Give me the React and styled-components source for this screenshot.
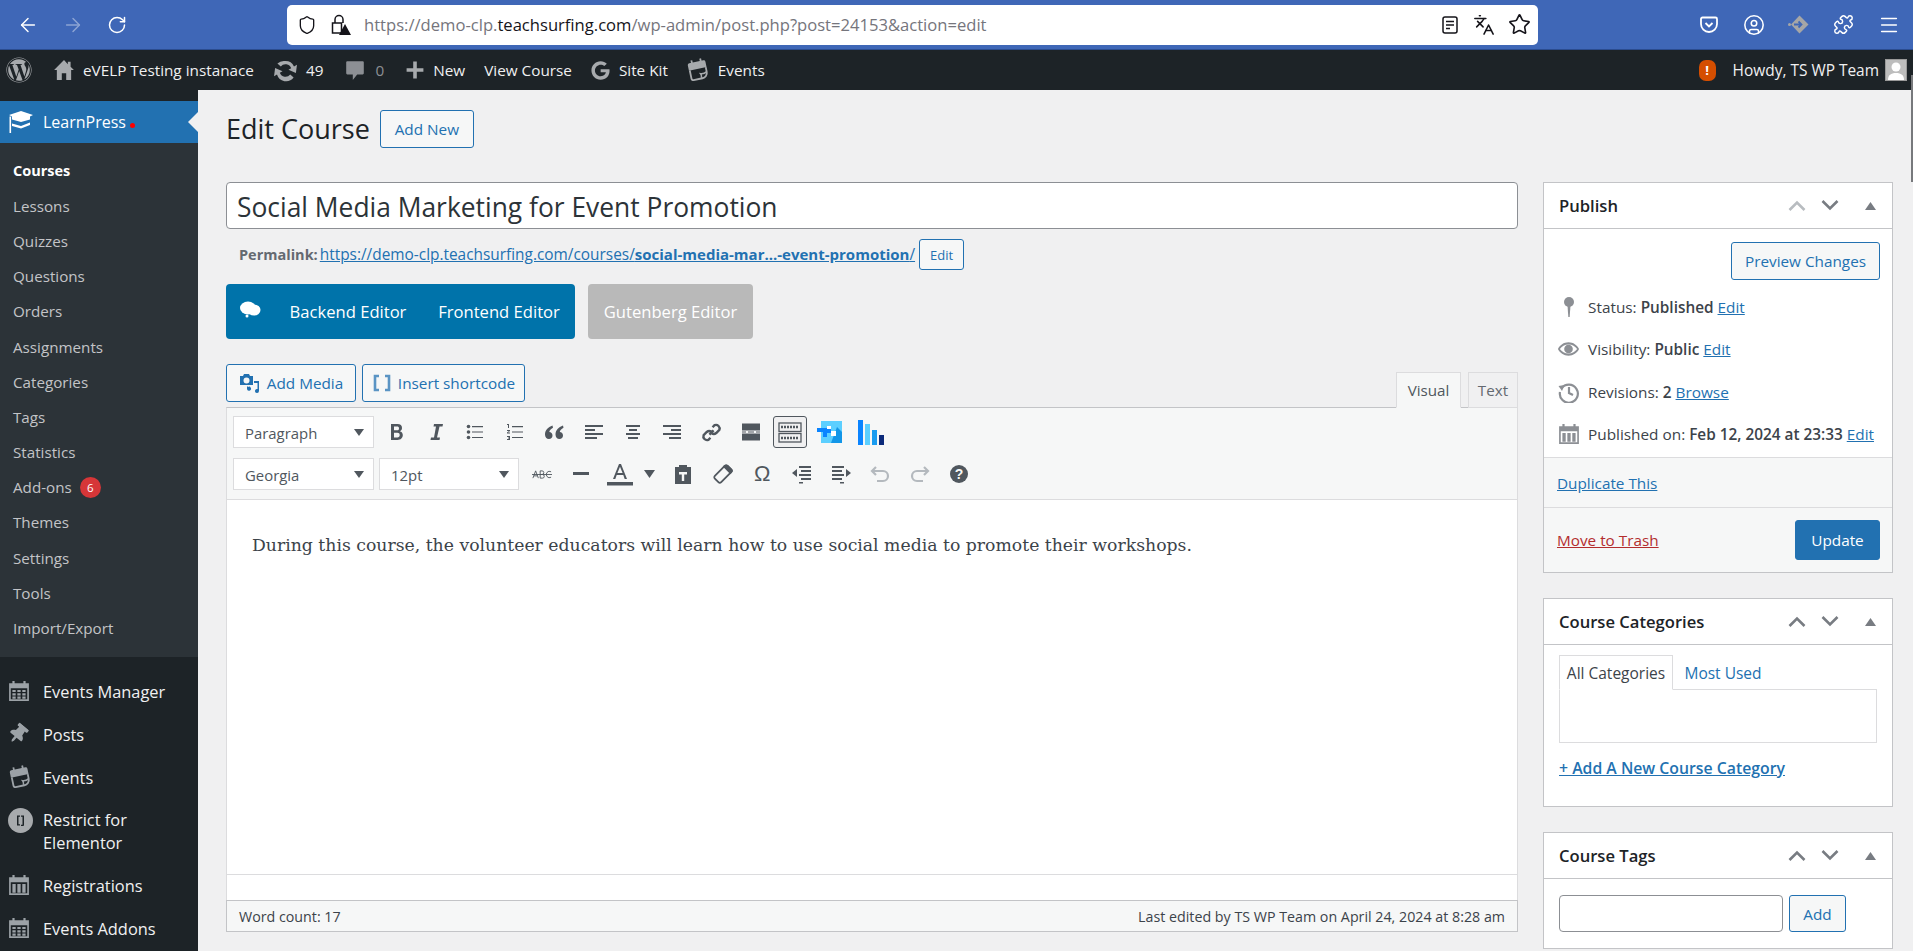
import React from "react";
import styled, { createGlobalStyle } from "styled-components";
import { FaWordpress, FaGoogle, FaThumbtack } from "react-icons/fa";
import { ArrowLeft, ArrowRight, RotateCw, Shield, Star, Languages, Menu, Puzzle, CircleUser } from "lucide-react";

const FONT = `"Open Sans", "Noto Sans", "Liberation Sans", sans-serif`;

const GlobalStyle = createGlobalStyle`
  html, body {
    margin: 0;
    height: 100%;
    overflow: hidden;
    background: #f0f0f1;
  }
  * { box-sizing: border-box; }
  body {
    font-family: ${FONT};
    font-size: 15px;
    color: #3c434a;
  }
`;

const Root = styled.div`
  position: relative;
  width: 1913px;
  height: 951px;
  display: flex;
  flex-direction: column;
  overflow: hidden;
`;

const ScrollThumb = styled.div`
  position: absolute;
  top: 75px;
  right: 0;
  width: 2px;
  height: 107px;
  background: #77797c;
`;

/* browser chrome */
const Chrome = styled.div`
  height: 50px;
  flex: none;
  display: flex;
  align-items: center;
  background: #3f67b7;
  border-bottom: 1px solid #2b4c8f;
  color: #fff;
`;

const NavButtons = styled.div`
  width: 287px;
  flex: none;
  display: flex;
  align-items: center;
  gap: 23px;
  padding-left: 17px;
`;

const UrlBar = styled.div`
  width: 1251px;
  height: 40px;
  flex: none;
  display: flex;
  align-items: center;
  background: #fff;
  border-radius: 5px;
  color: #15141a;
  padding: 0 7px 0 10px;
`;

const UrlText = styled.div`
  flex: 1;
  font-size: 16.6px;
  color: #75757c;
  padding-left: 13px;
  white-space: nowrap;
  b {
    font-weight: 400;
    color: #15141a;
  }
`;

const UrlIcons = styled.div`
  display: flex;
  align-items: center;
  gap: 13px;
`;

const LockWrap = styled.div`
  width: 20px;
  height: 22px;
  margin-left: 14px;
`;

const ChromeIcons = styled.div`
  flex: 1;
  display: flex;
  align-items: center;
  justify-content: flex-end;
  padding-right: 2px;
`;

const ChromeSlot = styled.span`
  width: 45px;
  display: flex;
  justify-content: center;
`;

/* admin bar */
const AdminBar = styled.div`
  height: 40px;
  flex: none;
  display: flex;
  align-items: center;
  background: #1d2327;
  color: #f0f0f1;
  font-size: 15.3px;
  padding-left: 6px;
`;

const BarItem = styled.div`
  display: flex;
  align-items: center;
  gap: ${(p) => p.$gap || 8}px;
  margin-right: ${(p) => p.$mr || 0}px;
  color: ${(p) => (p.$dim ? "#8c8f94" : "#f0f0f1")};
  white-space: nowrap;
  svg { color: ${(p) => (p.$dim ? "#8c8f94" : "#a7aaad")}; }
`;

const BarRight = styled.div`
  margin-left: auto;
  display: flex;
  align-items: center;
  padding-right: 6px;
  font-size: 15.45px;
`;

const Alert = styled.span`
  width: 17px;
  height: 21px;
  border-radius: 7px;
  background: #d54e00;
  color: #fff;
  font-size: 13px;
  font-weight: 700;
  display: flex;
  align-items: center;
  justify-content: center;
  margin-right: 17px;
`;

const Avatar = styled.span`
  width: 22px;
  height: 22px;
  margin-left: 6px;
  background: #bdbdbd;
  border: 1px solid #9a9a9a;
  display: flex;
  align-items: flex-end;
  justify-content: center;
  overflow: hidden;
`;

const Body = styled.div`
  flex: 1;
  min-height: 0;
  display: flex;
`;

/* sidebar */
const Sidebar = styled.nav`
  width: 198px;
  flex: none;
  background: #1d2327;
  padding-top: 11px;
`;

const ActiveItem = styled.div`
  position: relative;
  height: 42px;
  background: #2271b1;
  color: #fff;
  font-size: 16px;
  display: flex;
  align-items: center;
  padding-left: 8px;
  gap: 9px;
  &::after {
    content: "";
    position: absolute;
    right: 0;
    top: 11px;
    border: 10px solid transparent;
    border-left-width: 0;
    border-right-color: #f0f0f1;
  }
`;

const RedDot = styled.span`
  width: 5px;
  height: 5px;
  border-radius: 50%;
  background: #f00;
  margin: 6px 0 0 -5px;
`;

const SubMenu = styled.div`
  background: #2c3338;
  padding: 10px 0 11px;
  margin-bottom: 13px;
`;

const SubItem = styled.div`
  height: 35.2px;
  display: flex;
  align-items: center;
  gap: 8px;
  padding-left: 13px;
  font-size: ${(p) => (p.$active ? 14.5 : 15.2)}px;
  color: ${(p) => (p.$active ? "#fff" : "#c3c4c7")};
  font-weight: ${(p) => (p.$active ? 700 : 400)};
`;

const Count = styled.span`
  width: 21px;
  height: 21px;
  border-radius: 50%;
  background: #d63638;
  color: #fff;
  font-size: 11.5px;
  display: flex;
  align-items: center;
  justify-content: center;
`;

const TopItem = styled.div`
  display: flex;
  align-items: ${(p) => (p.$tall ? "flex-start" : "center")};
  min-height: 43px;
  padding: ${(p) => (p.$tall ? "9px 0 10px 8px" : "0 0 0 8px")};
  color: #f0f0f1;
  font-size: 16.4px;
  line-height: 23px;
`;

const TopIcon = styled.span`
  width: 35px;
  flex: none;
  display: flex;
  color: #9ca2a7;
`;

/* main */
const Main = styled.main`
  flex: 1;
  min-width: 0;
  display: flex;
  gap: 25px;
  padding: 0 20px 0 28px;
`;

const EditorCol = styled.div`
  width: 1292px;
  flex: none;
`;

const HeadingRow = styled.div`
  height: 92px;
  display: flex;
  align-items: flex-start;
  gap: 10px;
  padding-top: 20px;
`;

const Heading = styled.h1`
  margin: 0;
  font-size: 27px;
  line-height: 38px;
  font-weight: 400;
  color: #1d2327;
`;

const OutlineButton = styled.button`
  font: inherit;
  font-size: ${(p) => p.$size || 15.3}px;
  height: ${(p) => p.$h || 38}px;
  width: ${(p) => (p.$w ? `${p.$w}px` : "auto")};
  flex: none;
  margin-left: ${(p) => p.$ml || 0}px;
  color: #2271b1;
  background: #f6f7f7;
  border: 1px solid #2271b1;
  border-radius: 3px;
  padding: 0;
  display: flex;
  align-items: center;
  justify-content: center;
  gap: ${(p) => p.$gap || 0}px;
`;

const TitleInput = styled.div`
  height: 47px;
  background: #fff;
  border: 1px solid #8c8f94;
  border-radius: 4px;
  font-size: 26.4px;
  line-height: 45px;
  padding: 2px 0 0 10px;
  color: #2c3338;
  overflow: hidden;
`;

const PermalinkRow = styled.div`
  height: 55px;
  display: flex;
  align-items: center;
  padding: 0 0 4px 13px;
  font-size: 14.5px;
  color: #646970;
  gap: 2px;
  white-space: nowrap;
`;

const Link = styled.a`
  color: ${(p) => p.$color || "#2271b1"};
  text-decoration: underline;
  font-weight: ${(p) => p.$weight || 400};
  font-size: ${(p) => (p.$size ? `${p.$size}px` : "inherit")};
`;

const ComposerRow = styled.div`
  display: flex;
  gap: 13px;
  height: 55px;
`;

const ComposerGroup = styled.div`
  width: ${(p) => p.$w}px;
  display: flex;
  align-items: center;
  border-radius: 4px;
  background: ${(p) => p.$bg};
  color: #fff;
  font-size: 16.6px;
  white-space: nowrap;
`;

const ComposerLabel = styled.span`
  width: ${(p) => p.$w}px;
  text-align: center;
  flex: none;
`;

const MediaRow = styled.div`
  display: flex;
  align-items: flex-end;
  height: 68px;
  gap: 6px;
`;

const MediaButtons = styled.div`
  display: flex;
  gap: 6px;
  padding-bottom: 5px;
`;

const Tabs = styled.div`
  margin-left: auto;
  display: flex;
  gap: 7px;
  margin-bottom: -1px;
`;

const Tab = styled.div`
  height: 36px;
  width: ${(p) => p.$w}px;
  display: flex;
  align-items: center;
  justify-content: center;
  font-size: 15.2px;
  border: 1px solid #dcdcde;
  border-bottom-color: ${(p) => (p.$active ? "#f6f7f7" : "#dcdcde")};
  background: ${(p) => (p.$active ? "#f6f7f7" : "#f0f0f1")};
  color: ${(p) => (p.$active ? "#50575e" : "#646970")};
  position: relative;
  z-index: 1;
`;

const EditorBox = styled.div`
  border: 1px solid #dcdcde;
  border-top-color: #c3c4c7;
  background: #fff;
  height: 525px;
  display: flex;
  flex-direction: column;
`;

const Toolbar = styled.div`
  height: 92px;
  flex: none;
  background: #f6f7f7;
  border-bottom: 1px solid #dcdcde;
  display: flex;
  flex-direction: column;
  gap: 10px;
  padding: 8px 0 0 6px;
`;

const ToolRow = styled.div`
  display: flex;
  align-items: center;
  height: 32px;
`;

const Select = styled.div`
  width: ${(p) => p.$w}px;
  height: 32px;
  flex: none;
  margin-right: ${(p) => p.$mr ?? 5}px;
  background: #fff;
  border: 1px solid #dcdcde;
  font-size: 14.9px;
  color: #50575e;
  display: flex;
  align-items: center;
  justify-content: space-between;
  padding: 1px 9px 0 11px;
  &::after {
    content: "";
    border: 5px solid transparent;
    border-top: 7px solid #50575e;
    border-bottom-width: 0;
  }
`;

const ToolButton = styled.span`
  width: ${(p) => p.$w || 39.4}px;
  height: 32px;
  flex: none;
  margin-right: ${(p) => p.$mr || 0}px;
  display: flex;
  align-items: center;
  justify-content: center;
  color: ${(p) => (p.$muted ? "#b4b9be" : "#50575e")};
`;

const ToggleButton = styled(ToolButton)`
  width: 34px;
  margin: 0 2.5px;
  background: #f0f0f1;
  border: 1px solid #50575e;
  border-radius: 3px;
`;

const OmegaGlyph = styled.span`
  font-family: "Liberation Sans", sans-serif;
  font-size: 22px;
`;

const Content = styled.div`
  flex: 1;
  padding: 33px 25px 0;
  font-family: "DejaVu Serif", Georgia, "Liberation Serif", serif;
  font-size: 17.25px;
  color: #3c434a;
  line-height: 24px;
`;

const ResizeStrip = styled.div`
  height: 26px;
  flex: none;
  border-top: 1px solid #dcdcde;
`;

const StatusBar = styled.div`
  height: 32px;
  flex: none;
  margin: 0 -1px -1px;
  background: #f6f7f7;
  border: 1px solid #c3c4c7;
  display: flex;
  align-items: center;
  justify-content: space-between;
  font-size: 14.25px;
  color: #3c434a;
  padding: 0 12px;
`;

/* side column */
const SideCol = styled.div`
  width: 350px;
  flex: none;
  padding-top: 92px;
  display: flex;
  flex-direction: column;
  gap: 25px;
`;

const Box = styled.section`
  background: #fff;
  border: 1px solid #c3c4c7;
  flex: none;
`;

const BoxHeader = styled.div`
  height: 46px;
  display: flex;
  align-items: center;
  justify-content: space-between;
  border-bottom: 1px solid #c3c4c7;
  padding: 0 16px 0 15px;
  color: #1d2327;
  font-size: 16.6px;
  font-weight: 600;
`;

const BoxControls = styled.div`
  display: flex;
  align-items: center;
  gap: 15px;
  svg { display: block; }
  svg:last-child { margin-left: 11px; }
`;

const PublishTop = styled.div`
  display: flex;
  justify-content: flex-end;
  padding: 13px 12px 0;
`;

const Misc = styled.div`
  height: 177px;
  padding: 6px 0 0 13px;
  display: flex;
  flex-direction: column;
`;

const MiscRow = styled.div`
  height: 42.3px;
  flex: none;
  display: flex;
  align-items: center;
  gap: 8px;
  font-size: 15.35px;
  white-space: nowrap;
  b { font-weight: 600; }
`;

const MiscIcon = styled.span`
  width: 23px;
  flex: none;
  display: flex;
  justify-content: center;
  color: #8c8f94;
`;

const Duplicate = styled.div`
  height: 50px;
  background: #f6f7f7;
  border-top: 1px solid #dcdcde;
  display: flex;
  align-items: center;
  padding-left: 13px;
  font-size: 15.3px;
`;

const PublishFooter = styled.div`
  height: 65px;
  background: #f6f7f7;
  border-top: 1px solid #dcdcde;
  display: flex;
  align-items: center;
  justify-content: space-between;
  padding: 0 12px 1px 13px;
  font-size: 15.3px;
`;

const PrimaryButton = styled.button`
  font: inherit;
  width: 85px;
  height: 40px;
  color: #fff;
  background: #2271b1;
  border: 1px solid #2271b1;
  border-radius: 3px;
  font-size: 15.3px;
`;

const BoxBody = styled.div`
  padding: ${(p) => p.$pad || "10px 15px 0"};
  height: ${(p) => (p.$h ? `${p.$h}px` : "auto")};
  font-size: 15.5px;
`;

const CatTabs = styled.div`
  display: flex;
  align-items: stretch;
  height: 35px;
  margin-bottom: -1px;
`;

const CatTab = styled.div`
  width: ${(p) => p.$w}px;
  display: flex;
  align-items: center;
  justify-content: center;
  color: ${(p) => (p.$active ? "#3c434a" : "#2271b1")};
  border: ${(p) => (p.$active ? "1px solid #dcdcde" : "none")};
  border-bottom: ${(p) => (p.$active ? "1px solid #fff" : "none")};
  position: relative;
  z-index: ${(p) => (p.$active ? 1 : 0)};
`;

const CatList = styled.div`
  width: 318px;
  height: 54px;
  border: 1px solid #dcdcde;
  margin-bottom: 14px;
`;

const TagRow = styled.div`
  display: flex;
  gap: 6px;
`;

const TagInput = styled.div`
  width: 224px;
  height: 37px;
  background: #fff;
  border: 1px solid #8c8f94;
  border-radius: 4px;
`;

const Glyph = ({ size = 20, children }) => (
  <svg width={size} height={size} viewBox="0 0 20 20" fill="currentColor">
    {children}
  </svg>
);

const CalendarIcon = ({ size = 22, dots = true }) => (
  <Glyph size={size}>
    <path d="M1 3h3V1h2v2h8V1h2v2h3v16H1zM2.5 7.5v10h15v-10z" fillRule="evenodd" />
    {dots ? (
      <path d="M4 9h3v2H4zM8.5 9h3v2h-3zM13 9h3v2h-3zM4 12h3v2H4zM8.5 12h3v2h-3zM13 12h3v2h-3zM4 15h3v2H4zM8.5 15h3v2h-3zM13 15h3v2h-3z" />
    ) : (
      <path d="M4 9h3v8H4zM8.5 9h3v8h-3zM13 9h3v8h-3z" />
    )}
  </Glyph>
);

const EventsIcon = ({ size = 24 }) => (
  <Glyph size={size}>
    <g transform="rotate(-12 10 10)">
      <path d="M2.5 4.5a1.5 1.5 0 0 1 1.5-1.5h12a1.5 1.5 0 0 1 1.5 1.5V9h-15z" />
      <path d="M5.5 1H7v3H5.5zM13 1h1.5v3H13z" />
      <path d="M3.2 9v7a1.5 1.5 0 0 0 1.5 1.5h7.5c2.5 0 4.600-2 4.600-4.500V9" fill="none" stroke="currentColor" strokeWidth="1.5" />
      <path d="M11.5 17c.5-1.500.5-2.500 0-3.500 1.500.5 3.500.5 5-.5" fill="none" stroke="currentColor" strokeWidth="1.3" />
    </g>
  </Glyph>
);

const HomeIcon = () => (
  <Glyph size={22}>
    <path d="M10 1 1 10h2.500v9h4.500v-6h4v6h4.500v-9H19l-3-3V2.500h-2.500v2.200z" />
  </Glyph>
);

const UpdateIcon = () => (
  <Glyph size={27}>
    <path d="M10 3a7 7 0 0 1 6.300 4l2.200-1.200-.8 6-5.500-2.300 2-1.200A4.500 4.500 0 0 0 6.500 7L4 4.800A7 7 0 0 1 10 3zM3.700 13l-2.200 1.200.8-6 5.500 2.300-2 1.200a4.500 4.500 0 0 0 7.700 1.300l2.500 2.200A7 7 0 0 1 3.700 13z" />
  </Glyph>
);

const CommentIcon = () => (
  <Glyph size={22}>
    <path d="M3 2h14a1 1 0 0 1 1 1v10a1 1 0 0 1-1 1h-5l-4 5v-5H3a1 1 0 0 1-1-1V3a1 1 0 0 1 1-1z" />
  </Glyph>
);

const PlusIcon = () => (
  <Glyph size={24}>
    <path d="M8.5 3h3v5.500H17v3h-5.500V17h-3v-5.500H3v-3h5.500z" />
  </Glyph>
);

const CapIcon = () => (
  <svg width="26" height="24" viewBox="0 0 26 24" fill="#fff">
    <path d="M13 1 25 5l-3 1.500v3L13 12 4 9.500v-3L1 5z" />
    <path d="M1.500 6.500h1.600V23H1.500zM4 13.500l9 2.500 9-3.500v2.500l-9 3.500-9-2.500z" />
  </svg>
);

const Chevron = ({ up, dim }) => (
  <svg width="18" height="11" viewBox="0 0 18 11" fill="none" stroke={dim ? "#b8bcc0" : "#787c82"} strokeWidth="2.6">
    <path d={up ? "M1.500 10 9 2.500 16.500 10" : "M1.500 1 9 8.500 16.500 1"} />
  </svg>
);

const Caret = ({ down, color = "#787c82" }) => (
  <svg width="11" height="8" viewBox="0 0 11 8" fill={color}>
    <path d={down ? "M0 0h11L5.500 8z" : "M5.500 0 11 8H0z"} />
  </svg>
);

const BoxTitle = ({ title, dimUp }) => (
  <BoxHeader>
    {title}
    <BoxControls>
      <Chevron up dim={dimUp} />
      <Chevron />
      <Caret />
    </BoxControls>
  </BoxHeader>
);

const AlignIcon = ({ d }) => (
  <svg width="18" height="18" viewBox="0 0 18 18" fill="none" stroke="currentColor" strokeWidth="2">
    <path d={d} />
  </svg>
);

const BoldIcon = () => (
  <svg width="16" height="18" viewBox="0 0 16 18" fill="currentColor">
    <path d="M2 1h6.500c3 0 4.500 1.500 4.500 4 0 1.700-.9 2.800-2.200 3.300 1.800.4 3 1.700 3 3.800 0 3-2 4.900-5.300 4.900H2zm3 2.600v3.700h3c1.300 0 2-.7 2-1.900s-.7-1.800-2-1.800zm0 6.200v4.600h3.300c1.600 0 2.400-.8 2.400-2.300s-.8-2.300-2.400-2.300z" fillRule="evenodd" />
  </svg>
);

const ItalicIcon = () => (
  <svg width="16" height="18" viewBox="0 0 16 18" fill="currentColor">
    <path d="M6 1h9l-.5 2.400H11.500L9 14.600h3L11.500 17h-9l.5-2.400h3L8 3.400H5.500z" />
  </svg>
);

const BulletIcon = () => (
  <svg width="18" height="18" viewBox="0 0 18 18" fill="currentColor">
    <circle cx="2.500" cy="3.500" r="1.800" /><circle cx="2.500" cy="9" r="1.800" /><circle cx="2.500" cy="14.500" r="1.800" />
    <path d="M6 3h11v1.200H6zM6 8.400h11v1.200H6zM6 13.900h11v1.200H6z" />
  </svg>
);

const NumberIcon = () => (
  <svg width="18" height="18" viewBox="0 0 18 18" fill="currentColor">
    <path d="M1 1h2v4H2V2H1zM1 7h3v1L2 9.500h2v1H1v-1L3 8H1zM1 13h3v4H1v-1h2v-.5H2v-1h1V14H1z" />
    <path d="M6 3h11v1.200H6zM6 8.400h11v1.200H6zM6 13.900h11v1.200H6z" />
  </svg>
);

const QuoteIcon = () => (
  <svg width="20" height="18" viewBox="0 0 20 18" fill="currentColor">
    <path d="M8.500 2.500C4 4 1 7.500 1 11.500 1 14 2.500 16 5 16c2 0 3.500-1.500 3.500-3.500S7 9 5.300 9c.2-1.500 1.500-3 3.700-4.200zM19 2.500c-4.500 1.500-7.500 5-7.500 9 0 2.500 1.500 4.500 4 4.500 2 0 3.500-1.500 3.500-3.500S17.500 9 15.800 9c.2-1.500 1.500-3 3.700-4.200z" />
  </svg>
);

const LinkIcon = () => (
  <svg width="21" height="21" viewBox="0 0 20 20" fill="none" stroke="currentColor" strokeWidth="2.3">
    <path d="M8 12l4-4M11 5l2-2a3.500 3.500 0 0 1 4.500 4.500l-3 3a3.500 3.500 0 0 1-4.500 0M9 15l-2 2a3.500 3.500 0 0 1-4.500-4.500l3-3a3.500 3.500 0 0 1 4.500 0" />
  </svg>
);

const MoreIcon = () => (
  <svg width="18" height="18" viewBox="0 0 18 18" fill="currentColor">
    <path d="M0 .5h18v7H0zM0 10.500h18v7H0zM0 8.500h4v1H0zM6 8.500h6v1H6zM14 8.500h4v1h-4z" />
  </svg>
);

const KeyboardIcon = () => (
  <svg width="24" height="21" viewBox="0 0 24 21" fill="none" stroke="currentColor" strokeWidth="1.3">
    <rect x="1" y="1" width="22" height="8.500" />
    <rect x="1" y="11.500" width="22" height="8.500" />
    <path strokeDasharray="2 1" d="M3 5h18M3 16h18" strokeWidth="2.4" />
  </svg>
);

const TealIcon = () => (
  <svg width="26" height="24" viewBox="0 0 26 24">
    <rect x="4" y="1" width="21" height="22" fill="#5ccfff" />
    <path d="M14 23 25 23V12L20 7z" fill="#1296e8" />
    <path d="M0 8h14v5h-4v4H6v-5H0z" fill="#0a84ff" />
    <rect x="14" y="11" width="5" height="5" fill="#fff" />
    <rect x="10" y="6" width="4" height="3" fill="#fff" />
  </svg>
);

const BarsIcon = () => (
  <svg width="26" height="25" viewBox="0 0 26 25">
    <rect x="0" y="0" width="5" height="25" fill="#0a84ff" />
    <rect x="7" y="4" width="5" height="21" fill="#5ccfff" />
    <rect x="14" y="10" width="5" height="15" fill="#1a9cf0" />
    <rect x="21" y="15" width="5" height="10" fill="#0c2a7a" />
  </svg>
);

const StrikeIcon = () => (
  <svg width="20" height="11" viewBox="0 0 22 12" fill="none" stroke="currentColor" strokeWidth="1">
    <path d="M1 10l3-8 3 8M2 7.500h4M9 2v8h2.500a2 2 0 0 0 0-4H9h2a2 2 0 0 0 0-4zM21 3a3.500 3.500 0 1 0 0 6M0 6h22" />
  </svg>
);

const TextColorIcon = () => (
  <svg width="26" height="24" viewBox="0 0 26 24" fill="currentColor">
    <path d="M12 2h2l6 15h-2.300l-1.400-4H9.700l-1.400 4H6zm1 2.800L10.400 11h5.200z" fillRule="evenodd" />
    <path d="M0 20h26v3.500H0z" />
  </svg>
);

const PasteIcon = () => (
  <svg width="20" height="21" viewBox="0 0 20 21" fill="currentColor">
    <path d="M2 3h4V1h8v2h4v17H2zM6 8v2.500h2.800V17h2.400v-6.500H14V8z" fillRule="evenodd" />
  </svg>
);

const EraserIcon = () => (
  <svg width="20" height="20" viewBox="0 0 20 20" fill="none" stroke="currentColor" strokeWidth="1.8">
    <g transform="rotate(45 10 10)">
      <rect x="5.500" y="1" width="9" height="18" rx="2" />
      <path d="M5.500 3a2 2 0 0 1 2-2h5a2 2 0 0 1 2 2v1h-9z" fill="currentColor" />
    </g>
  </svg>
);

const OutdentIcon = ({ flip }) => (
  <svg width="20" height="20" viewBox="0 0 20 20" fill="currentColor" style={flip ? { transform: "scaleX(-1)" } : undefined}>
    <path d="M7 2h12v2H7zM9 6h10v2H9zM0 9l5-4v8zM7 10h12v2H7zM9 14h10v2H9zM7 18h4v1.500H7z" />
  </svg>
);

const UndoIcon = ({ flip }) => (
  <svg width="20" height="18" viewBox="0 0 20 18" fill="none" stroke="currentColor" strokeWidth="2.2" style={flip ? { transform: "scaleX(-1)" } : undefined}>
    <path d="M6 2 2 6l4 4M2 6h11a5 5 0 0 1 0 10H7" />
  </svg>
);

const HelpIcon = () => (
  <svg width="20" height="20" viewBox="0 0 20 20">
    <circle cx="10" cy="10" r="9" fill="currentColor" />
    <text x="10" y="15" fontFamily="Liberation Sans, sans-serif" fontSize="14" fontWeight="700" textAnchor="middle" fill="#f6f7f7">?</text>
  </svg>
);

const MediaIcon = () => (
  <svg width="22" height="22" viewBox="0 0 22 22" fill="#2271b1">
    <path d="M1 4h3l1-2h5l1 2h3v9H1zM7.500 5.500a3 3 0 1 0 0 6 3 3 0 0 0 0-6z" fillRule="evenodd" />
    <path d="M9 15a2 2 0 1 1-1 2V14zM15 9h5v10a2 2 0 1 1-1.500-2V11H15z" />
  </svg>
);

const BracketIcon = () => (
  <svg width="20" height="20" viewBox="0 0 20 20" fill="none" stroke="#5a94c4" strokeWidth="2.6">
    <path d="M7 3H3v14h4M13 3h4v14h-4" />
  </svg>
);

const ReaderIcon = () => (
  <svg width="20" height="20" viewBox="0 0 20 20" fill="none" stroke="#15141a" strokeWidth="1.5">
    <rect x="3" y="2" width="14" height="16" rx="2" />
    <path d="M6 6.500h8M6 10h8M6 13.500h4" />
  </svg>
);

const SUBMENU = ["Lessons", "Quizzes", "Questions", "Orders", "Assignments", "Categories", "Tags", "Statistics"];
const SUBMENU_END = ["Themes", "Settings", "Tools", "Import/Export"];

export default function App() {
  return (
    <Root>
      <GlobalStyle />
      <Chrome>
        <NavButtons>
          <ArrowLeft size={22} strokeWidth={1.6} />
          <ArrowRight size={22} strokeWidth={1.6} opacity={0.4} />
          <RotateCw size={20} strokeWidth={1.8} />
        </NavButtons>
        <UrlBar>
          <Shield size={20} strokeWidth={1.6} />
          <LockWrap>
            <svg width="20" height="22" viewBox="0 0 20 22" fill="none" stroke="#15141a" strokeWidth="1.5">
              <path d="M4 9V5.500a4 4 0 0 1 8 0V9M1.500 9h9v10h-9z" />
              <path d="M14 10 20 21H8z" fill="#15141a" stroke="none" />
            </svg>
          </LockWrap>
          <UrlText>
            https://demo-clp.<b>teachsurfing.com</b>/wp-admin/post.php?post=24153&action=edit
          </UrlText>
          <UrlIcons>
            <ReaderIcon />
            <Languages size={22} strokeWidth={1.7} />
            <Star size={23} strokeWidth={1.7} />
          </UrlIcons>
        </UrlBar>
        <ChromeIcons>
          <ChromeSlot>
            <svg width="18" height="18" viewBox="0 0 18 18" fill="none" stroke="#fff" strokeWidth="1.8">
              <path d="M2.500 1.500h13a1.500 1.500 0 0 1 1.500 1.500v5a8 8 0 0 1-16 0V3a1.500 1.500 0 0 1 1.500-1.500zM5.500 7 9 10.500 12.500 7" />
            </svg>
          </ChromeSlot>
          <ChromeSlot><CircleUser size={22} strokeWidth={1.7} /></ChromeSlot>
          <ChromeSlot>
            <svg width="21" height="21" viewBox="0 0 21 21">
              <path d="M11.500 1.500 20.500 10.500 11.500 19.500 3 10.500z" fill="#a6a6a6" />
              <path d="M6 10.500h7.500M10.500 7.500l3 3-3 3" fill="none" stroke="#3f67b7" strokeWidth="1.8" />
              <circle cx="1.500" cy="10.500" r="1.500" fill="#a6a6a6" />
            </svg>
          </ChromeSlot>
          <ChromeSlot><Puzzle size={21} strokeWidth={1.7} /></ChromeSlot>
          <ChromeSlot><Menu size={22} strokeWidth={1.7} /></ChromeSlot>
        </ChromeIcons>
      </Chrome>

      <AdminBar>
        <BarItem $mr={21}><FaWordpress size={26} /></BarItem>
        <BarItem $mr={18}><HomeIcon />eVELP Testing instanace</BarItem>
        <BarItem $mr={21} $gap={7}><UpdateIcon />49</BarItem>
        <BarItem $mr={19} $gap={9} $dim><CommentIcon />0</BarItem>
        <BarItem $mr={19} $gap={6}><PlusIcon />New</BarItem>
        <BarItem $mr={19}>View Course</BarItem>
        <BarItem $mr={18} $gap={9}><FaGoogle size={19} />Site Kit</BarItem>
        <BarItem><EventsIcon />Events</BarItem>
        <BarRight>
          <Alert>!</Alert>
          Howdy, TS WP Team
          <Avatar>
            <svg width="18" height="19" viewBox="0 0 18 19" fill="#fff">
              <circle cx="9" cy="6" r="4.500" />
              <path d="M1 19c0-5 3-7 8-7s8 2 8 7z" />
            </svg>
          </Avatar>
        </BarRight>
      </AdminBar>

      <Body>
        <Sidebar>
          <ActiveItem>
            <CapIcon />
            LearnPress
            <RedDot />
          </ActiveItem>
          <SubMenu>
            <SubItem $active>Courses</SubItem>
            {SUBMENU.map((item) => <SubItem key={item}>{item}</SubItem>)}
            <SubItem>Add-ons<Count>6</Count></SubItem>
            {SUBMENU_END.map((item) => <SubItem key={item}>{item}</SubItem>)}
          </SubMenu>
          <TopItem><TopIcon><CalendarIcon /></TopIcon>Events Manager</TopItem>
          <TopItem><TopIcon><FaThumbtack size={20} style={{ transform: "rotate(40deg)" }} /></TopIcon>Posts</TopItem>
          <TopItem><TopIcon><EventsIcon /></TopIcon>Events</TopItem>
          <TopItem $tall>
            <TopIcon>
              <svg width="25" height="25" viewBox="0 0 25 25">
                <circle cx="12.500" cy="12.500" r="12.500" fill="#a7aaad" />
                <path d="M9 7.500h3v1.200h-1.500v7.600H12v1.200H9zM13 7.500h3v9.500c0 .5-.5 1-1 1h-2v-1.200h1.500V8.700H13z" fill="#1d2327" />
              </svg>
            </TopIcon>
            <span>Restrict for<br />Elementor</span>
          </TopItem>
          <TopItem><TopIcon><CalendarIcon dots={false} /></TopIcon>Registrations</TopItem>
          <TopItem><TopIcon><CalendarIcon /></TopIcon>Events Addons</TopItem>
        </Sidebar>

        <Main>
          <EditorCol>
            <HeadingRow>
              <Heading>Edit Course</Heading>
              <OutlineButton $w={94}>Add New</OutlineButton>
            </HeadingRow>
            <TitleInput>Social Media Marketing for Event Promotion</TitleInput>
            <PermalinkRow>
              <b>Permalink:</b>
              <Link $size={15.4}>https://demo-clp.teachsurfing.com/courses/<Link $weight={700} $size={15}>social-media-mar...-event-promotion</Link>/</Link>
              <OutlineButton $w={45} $h={31} $size={13} $ml={2}>Edit</OutlineButton>
            </PermalinkRow>
            <ComposerRow>
              <ComposerGroup $w={349} $bg="#0073aa">
                <ComposerLabel $w={48}>
                  <svg width="22" height="18" viewBox="0 0 22 18" fill="#fff">
                    <ellipse cx="9" cy="8" rx="8" ry="6.500" />
                    <ellipse cx="15" cy="10" rx="6.500" ry="5.500" />
                    <circle cx="8" cy="16" r="1.500" />
                  </svg>
                </ComposerLabel>
                <ComposerLabel $w={148}>Backend Editor</ComposerLabel>
                <ComposerLabel $w={154}>Frontend Editor</ComposerLabel>
              </ComposerGroup>
              <ComposerGroup $w={165} $bg="#b9b9b9">
                <ComposerLabel $w={165}>Gutenberg Editor</ComposerLabel>
              </ComposerGroup>
            </ComposerRow>
            <MediaRow>
              <MediaButtons>
                <OutlineButton $w={130} $gap={6}><MediaIcon />Add Media</OutlineButton>
                <OutlineButton $w={163} $gap={6}><BracketIcon />Insert shortcode</OutlineButton>
              </MediaButtons>
              <Tabs>
                <Tab $w={65} $active>Visual</Tab>
                <Tab $w={50}>Text</Tab>
              </Tabs>
            </MediaRow>
            <EditorBox>
              <Toolbar>
                <ToolRow>
                  <Select $w={141} $mr={3}>Paragraph</Select>
                  <ToolButton><BoldIcon /></ToolButton>
                  <ToolButton><ItalicIcon /></ToolButton>
                  <ToolButton><BulletIcon /></ToolButton>
                  <ToolButton><NumberIcon /></ToolButton>
                  <ToolButton><QuoteIcon /></ToolButton>
                  <ToolButton><AlignIcon d="M0 3h18M0 7h10M0 11h18M0 15h12" /></ToolButton>
                  <ToolButton><AlignIcon d="M2 3h14M5 7h8M2 11h14M4 15h10" /></ToolButton>
                  <ToolButton><AlignIcon d="M0 3h18M8 7h10M0 11h18M6 15h12" /></ToolButton>
                  <ToolButton><LinkIcon /></ToolButton>
                  <ToolButton><MoreIcon /></ToolButton>
                  <ToggleButton><KeyboardIcon /></ToggleButton>
                  <ToolButton $w={41}><TealIcon /></ToolButton>
                  <ToolButton><BarsIcon /></ToolButton>
                </ToolRow>
                <ToolRow>
                  <Select $w={141}>Georgia</Select>
                  <Select $w={140} $mr={3}>12pt</Select>
                  <ToolButton><StrikeIcon /></ToolButton>
                  <ToolButton>
                    <svg width="16" height="4" viewBox="0 0 16 4" fill="currentColor"><rect width="16" height="3" /></svg>
                  </ToolButton>
                  <ToolButton><TextColorIcon /></ToolButton>
                  <ToolButton $w={18} $mr={5.5}><Caret down color="#50575e" /></ToolButton>
                  <ToolButton><PasteIcon /></ToolButton>
                  <ToolButton><EraserIcon /></ToolButton>
                  <ToolButton><OmegaGlyph>Ω</OmegaGlyph></ToolButton>
                  <ToolButton><OutdentIcon /></ToolButton>
                  <ToolButton><OutdentIcon flip /></ToolButton>
                  <ToolButton $muted><UndoIcon /></ToolButton>
                  <ToolButton $muted><UndoIcon flip /></ToolButton>
                  <ToolButton><HelpIcon /></ToolButton>
                </ToolRow>
              </Toolbar>
              <Content>
                During this course, the volunteer educators will learn how to use social media to promote their workshops.
              </Content>
              <ResizeStrip />
              <StatusBar>
                <span>Word count: 17</span>
                <span>Last edited by TS WP Team on April 24, 2024 at 8:28 am</span>
              </StatusBar>
            </EditorBox>
          </EditorCol>

          <SideCol>
            <Box>
              <BoxTitle title="Publish" dimUp />
              <PublishTop>
                <OutlineButton $w={149}>Preview Changes</OutlineButton>
              </PublishTop>
              <Misc>
                <MiscRow>
                  <MiscIcon>
                    <svg width="14" height="22" viewBox="0 0 14 22" fill="currentColor">
                      <circle cx="7" cy="6" r="5" />
                      <path d="M5.500 9h3l-.8 12H6.300z" />
                    </svg>
                  </MiscIcon>
                  <span>Status: <b>Published</b> <Link>Edit</Link></span>
                </MiscRow>
                <MiscRow>
                  <MiscIcon>
                    <svg width="24" height="16" viewBox="0 0 24 16" fill="currentColor">
                      <path d="M12 1C7 1 3 4 1 8c2 4 6 7 11 7s9-3 11-7c-2-4-6-7-11-7zm0 2.200c4 0 7 2 9 4.800-2 2.800-5 4.800-9 4.800S5 10.800 3 8c2-2.800 5-4.800 9-4.800z" fillRule="evenodd" />
                      <circle cx="12" cy="8" r="4.500" />
                    </svg>
                  </MiscIcon>
                  <span>Visibility: <b>Public</b> <Link>Edit</Link></span>
                </MiscRow>
                <MiscRow>
                  <MiscIcon>
                    <svg width="22" height="22" viewBox="0 0 22 22" fill="none" stroke="currentColor" strokeWidth="2.2">
                      <path d="M3.500 7.500A9 9 0 1 1 2 11M11 6v6l4 2" />
                      <path d="M.5 5 6.500 4 4 10z" fill="currentColor" stroke="none" />
                    </svg>
                  </MiscIcon>
                  <span>Revisions: <b>2</b> <Link>Browse</Link></span>
                </MiscRow>
                <MiscRow>
                  <MiscIcon><CalendarIcon dots={false} /></MiscIcon>
                  <span>Published on: <b>Feb 12, 2024 at 23:33</b> <Link>Edit</Link></span>
                </MiscRow>
              </Misc>
              <Duplicate><Link>Duplicate This</Link></Duplicate>
              <PublishFooter>
                <Link $color="#b32d2e">Move to Trash</Link>
                <PrimaryButton>Update</PrimaryButton>
              </PublishFooter>
            </Box>

            <Box>
              <BoxTitle title="Course Categories" />
              <BoxBody $h={161}>
                <CatTabs>
                  <CatTab $w={114} $active>All Categories</CatTab>
                  <CatTab $w={100}>Most Used</CatTab>
                </CatTabs>
                <CatList />
                <Link $weight={600} $size={15.8}>+ Add A New Course Category</Link>
              </BoxBody>
            </Box>

            <Box>
              <BoxTitle title="Course Tags" />
              <BoxBody $pad="16px 15px">
                <TagRow>
                  <TagInput />
                  <OutlineButton $w={57} $h={37}>Add</OutlineButton>
                </TagRow>
              </BoxBody>
            </Box>
          </SideCol>
        </Main>
      </Body>
      <ScrollThumb />
    </Root>
  );
}
